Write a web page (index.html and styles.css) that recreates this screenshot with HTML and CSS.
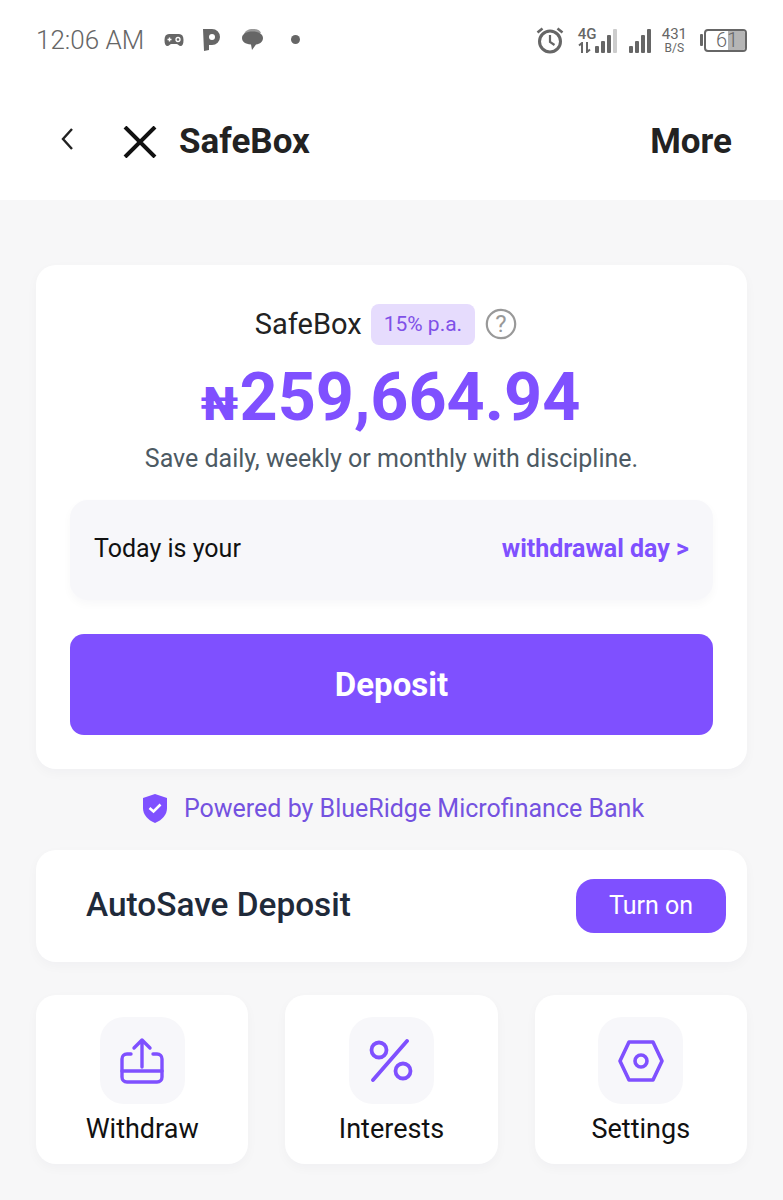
FILE: index.html
```html
<!DOCTYPE html>
<html lang="en">
<head>
    <meta charset="UTF-8">
    <meta name="viewport" content="width=device-width, initial-scale=1.0">
    <title>SafeBox</title>
    <link rel="stylesheet" href="styles.css">
</head>
<body>
    <div class="top">
        <div class="status">
            <span class="time">12:06 AM</span>
            <svg class="st-game" width="20" height="14" viewBox="0 0 20 14"><path d="M5 1h10c3 0 4.500 2 4.500 6 0 4-1 6-3 6-1.500 0-2.500-2-4-2H7.500c-1.500 0-2.500 2-4 2-2 0-3-2-3-6 0-4 1.500-6 4.500-6z" fill="#666"/><path d="M3.500 6.500h4M5.500 4.500v4" stroke="#fff" stroke-width="1.400"/><circle cx="14" cy="6.500" r="2" fill="none" stroke="#fff" stroke-width="1.300"/></svg>
            <svg class="st-p" width="18" height="23" viewBox="0 0 18 23"><path d="M0 1h9a8 8 0 0 1 0 16H6v5l-5 1z" fill="#666"/><circle cx="9" cy="9" r="3" fill="#fff"/></svg>
            <svg class="st-chat" width="23" height="23" viewBox="0 0 23 23"><path d="M3 6c1-3 4-5 9-5 4 0 7 1 8 4z" fill="#999"/><path d="M11.500 3.500c6 0 10.500 2.500 10.500 6.500 0 3.500-3 6-7 6.500L11 22l-1-5.500C4 16 1 13.500 1 10c0-4 4.500-6.500 10.500-6.500z" fill="#666"/></svg>
            <span class="st-dot"></span>
            <span class="status-right">
                <svg width="30" height="28" viewBox="0 0 30 28"><circle cx="15" cy="15.500" r="10.500" fill="none" stroke="#666" stroke-width="3"/><path d="M15 9v7l4.500 3" fill="none" stroke="#666" stroke-width="2.200"/><path d="M2.500 6.500l5-4M27.500 6.500l-5-4" stroke="#666" stroke-width="2.600"/></svg>
                <span class="net">
                    <span class="net-top">4G</span>
                    <svg width="14" height="11" viewBox="0 0 14 11"><path d="M4 11V1L1 3.500M9 0v10l3-2.500" fill="none" stroke="#666" stroke-width="2"/></svg>
                </span>
                <span class="bars">
                    <i class="b1"></i><i class="b2"></i><i class="b3"></i><i class="b4 off"></i>
                </span>
                <span class="bars bars-two">
                    <i class="b1"></i><i class="b2"></i><i class="b3"></i><i class="b4"></i>
                </span>
                <span class="speed">431<small>B/S</small></span>
                <span class="batt-tip"></span>
                <span class="batt"><span class="batt-fill"></span><span class="batt-num">61</span></span>
            </span>
        </div>
        <div class="nav">
            <svg class="nav-back" width="14" height="24" viewBox="0 0 14 24"><path d="M12 2L3 12l9 10" fill="none" stroke="#222" stroke-width="2.400"/></svg>
            <svg class="nav-close" width="34" height="32" viewBox="0 0 34 32"><path d="M2 1l30 30M32 1L2 31" fill="none" stroke="#111" stroke-width="4"/></svg>
            <span class="nav-title">SafeBox</span>
            <span class="nav-more">More</span>
        </div>
    </div>

    <div class="main">
        <section class="card box">
            <div class="box-head">
                <span class="box-name">SafeBox</span>
                <span class="rate">15% p.a.</span>
                <svg width="32" height="32" viewBox="0 0 32 32"><circle cx="16" cy="16" r="14.200" fill="none" stroke="#999" stroke-width="2.200"/><text x="16" y="24" text-anchor="middle" class="q">?</text></svg>
            </div>
            <div class="amount"><span class="naira">₦</span>259,664.94</div>
            <p class="tagline">Save daily, weekly or monthly with discipline.</p>
            <div class="today">
                <span>Today is your</span>
                <a class="today-link">withdrawal day &gt;</a>
            </div>
            <button class="deposit">Deposit</button>
        </section>

        <div class="powered">
            <svg width="26" height="29" viewBox="0 0 26 29"><path d="M13 0l12 4v10c0 7-5 12-12 15C6 26 1 21 1 14V4z" fill="#7f50ff"/><path d="M7.500 14l4 3.500 7-7" fill="none" stroke="#fff" stroke-width="2.600"/></svg>
            <span>Powered by BlueRidge Microfinance Bank</span>
        </div>

        <section class="card autosave">
            <span class="autosave-title">AutoSave Deposit</span>
            <button class="turn-on">Turn on</button>
        </section>

        <div class="tiles">
            <div class="card tile">
                <span class="tile-icon">
                    <svg width="46" height="48" viewBox="0 0 46 48"><g fill="none" stroke="#7f50ff" stroke-width="3.400" stroke-linecap="round" stroke-linejoin="round"><path d="M23 30V3M15 11l8-8 8 8"/><path d="M12 17H8c-3 0-5 2-5 5v18c0 3 2 5 5 5h30c3 0 5-2 5-5V22c0-3-2-5-5-5h-4"/><path d="M3 34h40"/></g></svg>
                </span>
                <span class="tile-label">Withdraw</span>
            </div>
            <div class="card tile">
                <span class="tile-icon">
                    <svg width="46" height="44" viewBox="0 0 46 44"><g fill="none" stroke="#7f50ff" stroke-width="3.800" stroke-linecap="round"><circle cx="11" cy="11" r="7.500"/><circle cx="35" cy="32" r="7.500"/><path d="M39 2L5 41"/></g></svg>
                </span>
                <span class="tile-label">Interests</span>
            </div>
            <div class="card tile">
                <span class="tile-icon">
                    <svg width="46" height="42" viewBox="0 0 46 42"><g fill="none" stroke="#7f50ff" stroke-width="3.600" stroke-linejoin="round"><path d="M11 2h24l9 19-9 19H11L2 21z"/><circle cx="23" cy="21" r="6"/></g></svg>
                </span>
                <span class="tile-label">Settings</span>
            </div>
        </div>
    </div>
</body>
</html>
```

FILE: styles.css
```css
* {
    box-sizing: border-box;
}
html, body {
    margin: 0;
    height: 1200px;
    overflow: hidden;
}
body {
    font-family: Roboto, sans-serif;
    background-color: #f7f7f8;
    color: #222;
}
.top {
    background-color: white;
    height: 200px;
}

/* status bar */
.status {
    height: 80px;
    display: flex;
    align-items: center;
    padding: 0 36px;
    color: #666;
}
.time {
    font-size: 26px;
    font-weight: 300;
    width: 128px;
    white-space: nowrap;
}
.st-game {
    margin-top: -1px;
}
.st-p {
    margin-left: 19px;
    margin-top: -2px;
}
.st-chat {
    margin-left: 20px;
    margin-top: -1px;
}
.st-dot {
    width: 9px;
    height: 9px;
    border-radius: 50%;
    background-color: #666;
    margin-left: 27px;
    margin-top: -2px;
}
.status-right {
    margin-left: auto;
    display: flex;
    align-items: center;
}
.net {
    display: flex;
    flex-direction: column;
    margin-left: 13px;
    width: 17px;
}
.net-top {
    font-size: 15px;
    line-height: 15px;
    font-weight: 500;
}
.bars {
    display: flex;
    align-items: flex-end;
    gap: 2px;
    height: 26px;
}
.bars-two {
    margin-left: 12px;
}
.bars i {
    display: block;
    width: 4px;
    background-color: #666;
    border-radius: 1px;
}
.bars .b1 { height: 7px; }
.bars .b2 { height: 12px; }
.bars .b3 { height: 18px; }
.bars .b4 { height: 24px; }
.bars .off { background-color: #ccc; }
.speed {
    display: flex;
    flex-direction: column;
    align-items: center;
    margin-left: 11px;
    font-size: 15px;
    line-height: 15px;
}
.speed small {
    font-size: 12px;
    line-height: 12px;
}
.batt-tip {
    width: 3px;
    height: 12px;
    background-color: #666;
    margin-left: 13px;
    margin-right: 1px;
    border-radius: 1px;
}
.batt {
    position: relative;
    width: 43px;
    height: 23px;
    border: 2px solid #666;
    border-radius: 4px;
    overflow: hidden;
}
.batt-fill {
    position: absolute;
    right: 0;
    top: 0;
    bottom: 0;
    width: 17px;
    background-color: #b5b5b5;
}
.batt-num {
    position: absolute;
    left: 10px;
    top: 0;
    font-size: 20px;
    line-height: 19px;
    font-weight: 300;
}

/* header */
.nav {
    height: 120px;
    display: flex;
    align-items: center;
    padding: 0 51px 0 60px;
}
.nav-back {
    margin-top: -3px;
}
.nav-close {
    margin-left: 49px;
    margin-top: 3px;
}
.nav-title {
    font-size: 35px;
    font-weight: 700;
    margin-left: 22px;
    margin-top: 3px;
}
.nav-more {
    margin-left: auto;
    font-size: 35px;
    font-weight: 700;
    margin-top: 3px;
}

.main {
    padding: 65px 36px 0;
}
.card {
    background-color: white;
    border-radius: 20px;
    box-shadow: 0 4px 12px rgba(30, 30, 60, 0.03);
}

/* main card */
.box {
    height: 504px;
    padding: 38px 34px 0;
    display: flex;
    flex-direction: column;
    align-items: center;
}
.box-head {
    display: flex;
    align-items: center;
    height: 42px;
    padding-right: 11px;
}
.box-name {
    font-size: 29px;
}
.rate {
    margin-left: 9px;
    height: 41px;
    line-height: 41px;
    padding: 0 13px;
    border-radius: 8px;
    background-color: #e6dcfd;
    color: #7f50e8;
    font-size: 21px;
}
.box-head svg {
    margin-left: 10px;
}
.q {
    font-family: Roboto, sans-serif;
    font-size: 24px;
    fill: #999;
}
.amount {
    margin-top: 13px;
    padding-right: 2px;
    font-size: 66.5px;
    line-height: 78px;
    font-weight: 700;
    color: #7f50ff;
    white-space: nowrap;
}
.naira {
    font-size: 46px;
    line-height: 1;
    font-weight: 900;
    margin-right: 1px;
}
.tagline {
    margin: 7px 0 0;
    font-size: 25px;
    line-height: 32px;
    color: #4d5a63;
}
.today {
    width: 100%;
    height: 100px;
    margin-top: 25px;
    padding: 0 24px 3px 24px;
    display: flex;
    align-items: center;
    justify-content: space-between;
    background-color: #f7f7fa;
    border-radius: 18px;
    box-shadow: 0 4px 10px rgba(30, 30, 60, 0.03);
    font-size: 25px;
    color: #111;
}
.today-link {
    color: #7f50ff;
    font-weight: 700;
}
.deposit {
    width: 100%;
    height: 101px;
    margin-top: 34px;
    border: 0;
    border-radius: 14px;
    background-color: #7f50ff;
    color: white;
    font-family: Roboto, sans-serif;
    font-size: 33px;
    font-weight: 700;
}

.powered {
    height: 81px;
    padding: 0 0 2px 3px;
    display: flex;
    align-items: center;
    justify-content: center;
    gap: 16px;
    font-size: 25px;
    color: #7452e0;
}

/* autosave */
.autosave {
    height: 112px;
    padding: 0 21px 0 50px;
    display: flex;
    align-items: center;
    justify-content: space-between;
}
.autosave-title {
    font-size: 33.4px;
    font-weight: 500;
    color: #1f2a3a;
    margin-bottom: 3px;
}
.turn-on {
    width: 150px;
    height: 54px;
    border: 0;
    border-radius: 18px;
    background-color: #7f50ff;
    color: white;
    font-family: Roboto, sans-serif;
    font-size: 25px;
    padding-bottom: 3px;
}

/* bottom tiles */
.tiles {
    display: grid;
    grid-template-columns: repeat(3, 1fr);
    gap: 37px;
    margin-top: 33px;
}
.tile {
    height: 169px;
    padding-top: 22px;
    display: flex;
    flex-direction: column;
    align-items: center;
}
.tile-icon {
    width: 85px;
    height: 87px;
    display: flex;
    align-items: center;
    justify-content: center;
    background-color: #f7f7fa;
    border-radius: 24px;
}
.tile-label {
    margin-top: 8px;
    font-size: 27px;
    line-height: 34px;
    color: #111;
}
```
